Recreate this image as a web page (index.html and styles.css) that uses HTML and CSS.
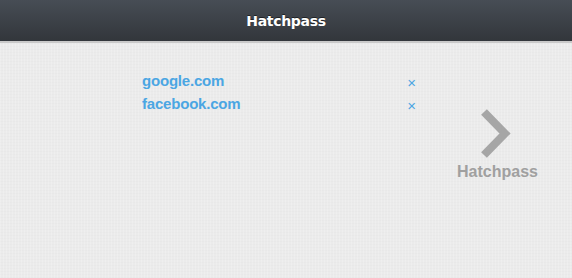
FILE: index.html
```html
<!DOCTYPE html>
<html lang="en">
<head>
  <meta charset="UTF-8">
  <title>Hatchpass</title>
  <link rel="stylesheet" href="styles.css">
</head>
<body>

  <div class="topbar">
    <h1>Hatchpass</h1>
  </div>

  <div class="content">
    <ul class="sites">
      <li><a href="#">google.com</a><span class="remove">&times;</span></li>
      <li><a href="#">facebook.com</a><span class="remove">&times;</span></li>
    </ul>

    <a href="#" class="go">
      <svg width="34" height="50" viewBox="0 0 34 50">
        <polyline points="6,3 27,24.5 6,46" fill="none" stroke="#a6a6a6" stroke-width="8" stroke-linejoin="miter"/>
      </svg>
      <span>Hatchpass</span>
    </a>
  </div>

</body>
</html>
```

FILE: styles.css
```css
html, body {
  margin: 0;
  height: 100%;
}

body {
  font-family: "Liberation Sans", Arial, sans-serif;
  background-color: #ebebeb;
  background-image:
    repeating-linear-gradient(90deg, rgba(255,255,255,0.18) 0 1px, transparent 1px 3px),
    repeating-linear-gradient(0deg, rgba(0,0,0,0.01) 0 1px, transparent 1px 3px);
}

.topbar {
  height: 41px;
  background: linear-gradient(#474d55, #32363b);
  border-bottom: 2px solid #c9c9c9;
  display: flex;
  align-items: center;
  justify-content: center;
}

.topbar h1 {
  margin: 0;
  color: #fff;
  font-family: "DejaVu Sans", sans-serif;
  font-size: 14px;
  font-weight: bold;
  letter-spacing: -0.3px;
  text-shadow: 0 -1px 0 rgba(0,0,0,0.5);
}

.content {
  display: flex;
  padding: 26px 0 0 142px;
}

.sites {
  list-style: none;
  margin: 0;
  padding: 0;
  width: 274px;
}

.sites li {
  display: flex;
  justify-content: space-between;
  align-items: center;
  height: 23px;
}

.sites a {
  color: #4ba6e3;
  font-size: 15px;
  font-weight: bold;
  text-decoration: none;
  letter-spacing: -0.2px;
}

.remove {
  color: #4ba6e3;
  font-size: 15px;
  margin-top: 3px;
}

.go {
  display: flex;
  flex-direction: column;
  align-items: center;
  margin: 40px 0 0 41px;
  text-decoration: none;
}

.go svg {
  margin-right: 4px;
}

.go span {
  color: #a0a0a0;
  font-size: 16px;
  font-weight: bold;
  margin-top: 4px;
}
```
